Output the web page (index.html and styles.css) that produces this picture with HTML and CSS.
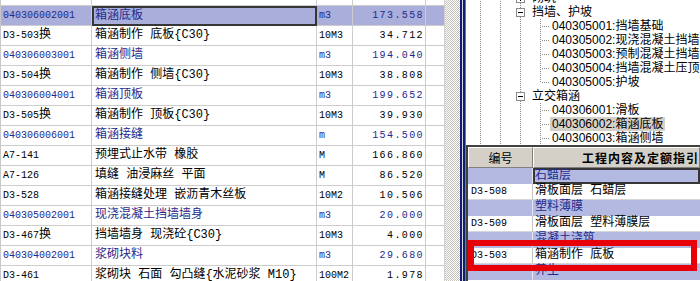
FILE: index.html
```html
<!DOCTYPE html>
<html lang="zh-CN">
<head>
    <meta charset="UTF-8">
    <title>清单计价</title>
    <link rel="stylesheet" href="styles.css">
</head>
<body>
    <!-- 清单 / 定额 grid -->
    <div class="left">
        <div class="grid">
            <div class="row top">
                <div class="c code"></div><div class="c name"><b>立交箱涵工程</b></div><div class="c unit"></div><div class="c qty"></div><div class="c more"></div>
            </div>
            <div class="row list sel">
                <div class="c code">040306002001</div><div class="c name">箱涵底板</div><div class="c unit">m3</div><div class="c qty">173.558</div><div class="c more"></div>
            </div>
            <div class="row">
                <div class="c code">D3-503<span class="zh">换</span></div><div class="c name">箱涵制作 底板{C30}</div><div class="c unit">10M3</div><div class="c qty">34.712</div><div class="c more">3</div>
            </div>
            <div class="row list">
                <div class="c code">040306003001</div><div class="c name">箱涵侧墙</div><div class="c unit">m3</div><div class="c qty">194.040</div><div class="c more"></div>
            </div>
            <div class="row">
                <div class="c code">D3-504<span class="zh">换</span></div><div class="c name">箱涵制作 侧墙{C30}</div><div class="c unit">10M3</div><div class="c qty">38.808</div><div class="c more">3</div>
            </div>
            <div class="row list">
                <div class="c code">040306004001</div><div class="c name">箱涵顶板</div><div class="c unit">m3</div><div class="c qty">199.652</div><div class="c more"></div>
            </div>
            <div class="row">
                <div class="c code">D3-505<span class="zh">换</span></div><div class="c name">箱涵制作 顶板{C30}</div><div class="c unit">10M3</div><div class="c qty">39.930</div><div class="c more">3</div>
            </div>
            <div class="row list">
                <div class="c code">040306006001</div><div class="c name">箱涵接缝</div><div class="c unit">m</div><div class="c qty">154.500</div><div class="c more"></div>
            </div>
            <div class="row">
                <div class="c code">A7-141</div><div class="c name">预埋式止水带 橡胶</div><div class="c unit">M</div><div class="c qty">166.860</div><div class="c more"></div>
            </div>
            <div class="row">
                <div class="c code">A7-126</div><div class="c name">填缝 油浸麻丝 平面</div><div class="c unit">M</div><div class="c qty">86.520</div><div class="c more"></div>
            </div>
            <div class="row">
                <div class="c code">D3-528</div><div class="c name">箱涵接缝处理 嵌沥青木丝板</div><div class="c unit">10M2</div><div class="c qty">10.506</div><div class="c more"></div>
            </div>
            <div class="row list">
                <div class="c code">040305002001</div><div class="c name">现浇混凝土挡墙墙身</div><div class="c unit">m3</div><div class="c qty">20.000</div><div class="c more"></div>
            </div>
            <div class="row">
                <div class="c code">D3-467<span class="zh">换</span></div><div class="c name">挡墙墙身 现浇砼{C30}</div><div class="c unit">10M3</div><div class="c qty">4.000</div><div class="c more">3</div>
            </div>
            <div class="row list">
                <div class="c code">040304002001</div><div class="c name">浆砌块料</div><div class="c unit">m3</div><div class="c qty">29.680</div><div class="c more"></div>
            </div>
            <div class="row">
                <div class="c code">D3-461</div><div class="c name">浆砌块 石面 勾凸缝{水泥砂浆 M10}</div><div class="c unit">100M2</div><div class="c qty">1.978</div><div class="c more">3</div>
            </div>
        </div>
    </div>

    <div class="track"></div>
    <div class="split"></div>

    <div class="right">
        <!-- 清单章节树 -->
        <div class="tree">
            <div class="tree-in">
                <div class="tn"><i class="g ln"></i><i class="g ln"></i><i class="g ln"><b class="sq plus"></b></i><span class="tx">砌筑</span></div>
                <div class="tn"><i class="g ln"></i><i class="g ln"></i><i class="g ln"><b class="sq"></b></i><span class="tx">挡墙、护坡</span></div>
                <div class="tn"><i class="g ln"></i><i class="g ln"></i><i class="g ln"></i><i class="g tee"></i><span class="tx">040305001:挡墙基础</span></div>
                <div class="tn"><i class="g ln"></i><i class="g ln"></i><i class="g ln"></i><i class="g tee"></i><span class="tx">040305002:现浇混凝土挡墙墙身</span></div>
                <div class="tn"><i class="g ln"></i><i class="g ln"></i><i class="g ln"></i><i class="g tee"></i><span class="tx">040305003:预制混凝土挡墙墙身</span></div>
                <div class="tn"><i class="g ln"></i><i class="g ln"></i><i class="g ln"></i><i class="g tee"></i><span class="tx">040305004:挡墙混凝土压顶</span></div>
                <div class="tn"><i class="g ln"></i><i class="g ln"></i><i class="g ln"></i><i class="g tee end"></i><span class="tx">040305005:护坡</span></div>
                <div class="tn"><i class="g ln"></i><i class="g ln"></i><i class="g ln"><b class="sq"></b></i><span class="tx">立交箱涵</span></div>
                <div class="tn"><i class="g ln"></i><i class="g ln"></i><i class="g ln"></i><i class="g tee"></i><span class="tx">040306001:滑板</span></div>
                <div class="tn"><i class="g ln"></i><i class="g ln"></i><i class="g ln"></i><i class="g tee"></i><span class="tx on">040306002:箱涵底板</span></div>
                <div class="tn"><i class="g ln"></i><i class="g ln"></i><i class="g ln"></i><i class="g tee"></i><span class="tx">040306003:箱涵侧墙</span></div>
            </div>
        </div>

        <!-- 定额指引 -->
        <div class="sub">
            <div class="sub-head">
                <div class="h1">编号</div>
                <div class="h2">工程内容及定额指引</div>
            </div>
            <div class="sr grp focus"><div class="s1"></div><div class="s2">石蜡层</div></div>
            <div class="sr"><div class="s1">D3-508</div><div class="s2">滑板面层 石蜡层</div></div>
            <div class="sr grp"><div class="s1"></div><div class="s2">塑料薄膜</div></div>
            <div class="sr"><div class="s1">D3-509</div><div class="s2">滑板面层 塑料薄膜层</div></div>
            <div class="sr grp"><div class="s1"></div><div class="s2">混凝土浇筑</div></div>
            <div class="sr"><div class="s1">D3-503</div><div class="s2">箱涵制作 底板</div></div>
            <div class="sr grp"><div class="s1"></div><div class="s2">养生</div></div>
        </div>
    </div>

    <!-- 红框标注 -->
    <div class="mark"></div>
</body>
</html>
```

FILE: styles.css
```css
body {
    margin: 0;
    width: 700px;
    height: 281px;
    overflow: hidden;
    display: flex;
    background: #fff;
    color: #000;
    font: 12px "Liberation Mono", "Noto Sans CJK SC", monospace;
}

/* left grid */
.left {
    width: 445px;
    flex: none;
    overflow: hidden;
}
.grid {
    margin-top: -14px;
    border-left: 1px solid #c8c8c8;
}
.row {
    display: grid;
    grid-template-columns: 91px 225px 36px 73px 19px;
    height: 20px;
}
.c {
    box-sizing: border-box;
    height: 20px;
    padding: 0 2px;
    border-right: 1px solid #cdcdcd;
    border-bottom: 1px solid #cdcdcd;
    line-height: 19px;
    white-space: nowrap;
    overflow: hidden;
}
.code {
    font-size: 10px;
}
.code .zh {
    font-size: 12px;
}
.name {
    padding-left: 3px;
}
.unit {
    font-size: 10px;
}
.qty {
    font-size: 10px;
    letter-spacing: 1.4px;
    text-align: right;
    padding-right: 1px;
}
.more {
    font-size: 10px;
    text-indent: 16px;
}
.list .c {
    color: #1f2a8c;
}
.sel .c {
    background: #a9aedb;
}
.sel .name {
    border: 2px solid #363636;
    line-height: 16px;
    padding-left: 1px;
}
.top .name b {
    font-weight: bold;
}

/* scrollbar track and pane splitter */
.track {
    width: 15px;
    flex: none;
    background: repeating-conic-gradient(#c6c2ba 0 25%, #fff 0 50%) 0 0 / 2px 2px;
}
.split {
    width: 6px;
    flex: none;
    background: linear-gradient(90deg, #0e1f6e 0 2px, #d8d8e8 2px 3px, #0e1f6e 3px 5px, #7a7a7a 5px);
}

/* right pane */
.right {
    flex: 1;
    display: flex;
    flex-direction: column;
    overflow: hidden;
}
.tree {
    height: 145px;
    flex: none;
    overflow: hidden;
    font-family: "Liberation Sans", "Noto Sans CJK SC", sans-serif;
}
.tree-in {
    margin-top: -9px;
    padding-left: 4px;
}
.tn {
    display: flex;
    height: 14px;
    line-height: 14px;
    white-space: nowrap;
}
.g {
    width: 20px;
    height: 14px;
    flex: none;
    display: flex;
    align-items: center;
}
.ln {
    background: repeating-linear-gradient(#8a8a8a 0 1px, transparent 1px 2px) 10px 0 / 1px 100% no-repeat;
}
.tee {
    background:
        repeating-linear-gradient(#8a8a8a 0 1px, transparent 1px 2px) 10px 0 / 1px 100% no-repeat,
        repeating-linear-gradient(90deg, #8a8a8a 0 1px, transparent 1px 2px) 12px 7px / 8px 1px no-repeat;
}
.tee.end {
    background:
        repeating-linear-gradient(#8a8a8a 0 1px, transparent 1px 2px) 10px 0 / 1px 8px no-repeat,
        repeating-linear-gradient(90deg, #8a8a8a 0 1px, transparent 1px 2px) 12px 7px / 8px 1px no-repeat;
}
.sq {
    box-sizing: border-box;
    width: 9px;
    height: 9px;
    margin-left: 6px;
    border: 1px solid #8a8a8a;
    background: linear-gradient(#000, #000) center / 5px 1px no-repeat, #fff;
}
.sq.plus {
    background:
        linear-gradient(#000, #000) center / 5px 1px no-repeat,
        linear-gradient(#000, #000) center / 1px 5px no-repeat,
        #fff;
}
.tx {
    padding: 0 2px;
}
.tx.on {
    background: #d4d0c8;
}

/* 定额指引 */
.sub {
    flex: 1;
    border-top: 2px solid #404040;
    border-left: 2px solid #404040;
    overflow: hidden;
}
.sub-head {
    display: flex;
    height: 21px;
    background: #d4d0c8;
    line-height: 20px;
    white-space: nowrap;
}
.h1, .h2 {
    box-sizing: border-box;
    border-top: 1px solid #fff;
    border-left: 1px solid #fff;
    border-right: 1px solid #808080;
    border-bottom: 1px solid #808080;
    font-family: "Noto Sans CJK SC", sans-serif;
}
.h1 {
    width: 65px;
    flex: none;
    text-align: center;
}
.h2 {
    flex: 1;
    padding-left: 48px;
    font-weight: bold;
    letter-spacing: 1px;
}
.sr {
    display: flex;
    height: 16px;
    line-height: 15px;
    white-space: nowrap;
}
.s1, .s2 {
    box-sizing: border-box;
    border-bottom: 1px solid #d6d6d6;
}
.s1 {
    width: 65px;
    flex: none;
    padding-left: 3px;
    border-right: 1px solid #c4c4c4;
    font-size: 10px;
}
.s2 {
    flex: 1;
    padding-left: 2px;
}
.grp .s1, .grp .s2 {
    background: #b4b9e1;
    color: #1f2a8c;
    border-bottom-color: #b4b9e1;
}
.grp .s1 {
    border-right-color: #e4e6f4;
}
.focus .s2 {
    border: 2px solid #363636;
    line-height: 12px;
    padding-left: 0;
}

/* red annotation box drawn over the list */
.mark {
    position: absolute;
    left: 468px;
    top: 240px;
    width: 229px;
    height: 31px;
    box-sizing: border-box;
    border: 6px solid #e80008;
}
```
